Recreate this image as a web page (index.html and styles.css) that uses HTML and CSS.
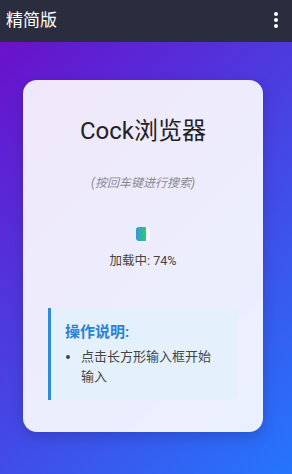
FILE: index.html
```html
<!DOCTYPE html>
<html lang="zh">
  <head>
    <meta charset="UTF-8" />
    <meta name="viewport" content="width=device-width, initial-scale=1" />
    <title>精简版</title>
    <link rel="stylesheet" href="styles.css">
  </head>
  <body>
    <header class="topbar">
      <span class="topbar-title">精简版</span>
      <span class="menu" aria-label="菜单"><i></i><i></i><i></i></span>
    </header>

    <main class="stage">
      <section class="card">
        <h1>Cock浏览器</h1>
        <p class="hint">(按回车键进行搜索)</p>

        <div class="loader"></div>
        <p class="progress">加载中: 74%</p>

        <div class="info">
          <h3>操作说明:</h3>
          <ul>
            <li>点击长方形输入框开始输入</li>
          </ul>
        </div>
      </section>
    </main>
  </body>
</html>
```

FILE: styles.css
```css
html,
body {
  height: 100%;
  margin: 0;
  padding: 0;
  font-family: Roboto, "Noto Sans CJK SC", "Noto Sans", sans-serif;
}
body {
  display: flex;
  flex-direction: column;
  background: #2a2d3e;
}

.topbar {
  flex: 0 0 42px;
  display: flex;
  align-items: center;
  justify-content: space-between;
  padding: 0 14px 0 6px;
  background: #2a2d3e;
  color: #fff;
}
.topbar-title {
  font-size: 17px;
  line-height: 1;
  margin-top: -1px;
}
.menu {
  display: flex;
  flex-direction: column;
  gap: 2px;
  margin-top: -2px;
}
.menu i {
  width: 4px;
  height: 4px;
  border-radius: 50%;
  background: #fff;
}

.stage {
  flex: 1;
  padding: 38px 29px 0 23px;
  background: linear-gradient(135deg, #6a11cb 0%, #2575fc 100%);
}

.card {
  padding: 30px 25px 32px;
  border-radius: 14px;
  background: rgba(255, 255, 255, 0.9);
  box-shadow: 0 4px 14px rgba(0, 0, 0, 0.18);
  text-align: center;
}
.card h1 {
  margin: 4px 0 0;
  font-size: 24px;
  line-height: 34px;
  font-weight: 400;
  color: #222;
}
.hint {
  margin: 26px 0 0;
  font-size: 12px;
  line-height: 18px;
  font-style: italic;
  color: #8a8a90;
}

.loader {
  width: 14px;
  height: 14px;
  margin: 35px auto 0;
  border-radius: 3px;
  background: linear-gradient(90deg, #3498db 0%, #2ecc71 72%, #f4fbf6 74%);
}
.progress {
  margin: 11px 0 0;
  font-size: 12.5px;
  line-height: 18px;
  color: #444;
}

.info {
  margin-top: 38px;
  padding: 13px 15px 13px 14px;
  border-left: 3px solid #2d8ad8;
  border-radius: 0 6px 6px 0;
  background: #e4f0fc;
  text-align: left;
}
.info h3 {
  margin: 0;
  font-size: 15px;
  line-height: 22px;
  font-weight: 700;
  color: #2b80d2;
}
.info ul {
  margin: 4px 0 0;
  padding-left: 16px;
}
.info li {
  font-size: 13px;
  line-height: 20px;
  color: #444;
}
```
